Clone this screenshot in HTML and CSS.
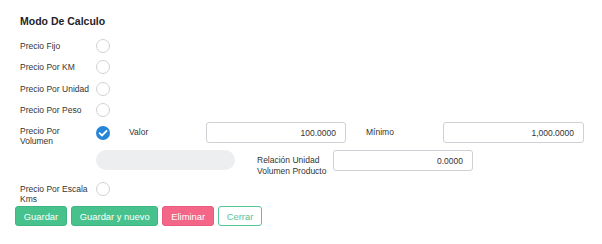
FILE: index.html
```html
<!DOCTYPE html>
<html>
    <head>
        <meta charset="utf-8" />
        <meta name="viewport" content="width=device-width, initial-scale=1" />
        <title>Modo De Calculo</title>
        <link rel="stylesheet" href="styles.css">
    </head>
    <body>
        <div class="pane">
            <div class="fields">
                <h1>Modo De Calculo</h1>

                <div class="row">
                    <span class="label">Precio Fijo</span>
                    <span class="radio"></span>
                </div>
                <div class="row">
                    <span class="label">Precio Por KM</span>
                    <span class="radio"></span>
                </div>
                <div class="row">
                    <span class="label">Precio Por Unidad</span>
                    <span class="radio"></span>
                </div>
                <div class="row before-group">
                    <span class="label">Precio Por Peso</span>
                    <span class="radio"></span>
                </div>

                <div class="row volumen">
                    <span class="label">Precio Por Volumen</span>
                    <div class="volumen-body">
                        <div class="sub">
                            <span class="radio checked">
                                <svg viewBox="0 0 14 14" width="14" height="14">
                                    <path d="M3.6 7.2 L6 9.5 L10.6 4.8" fill="none" stroke="#fff" stroke-width="1.8" stroke-linecap="round" stroke-linejoin="round" />
                                </svg>
                            </span>
                            <span class="field-label first">Valor</span>
                            <input class="num" type="text" value="100.0000" />
                            <span class="field-label gap">Mínimo</span>
                            <input class="num wide" type="text" value="1,000.0000" />
                        </div>
                        <div class="sub second">
                            <span class="pill"></span>
                            <span class="field-label two">Relación Unidad Volumen Producto</span>
                            <input class="num" type="text" value="0.0000" />
                        </div>
                    </div>
                </div>

                <div class="row escala">
                    <span class="label">Precio Por Escala Kms</span>
                    <span class="radio"></span>
                </div>
            </div>

            <div class="actions">
                <button class="btn green">Guardar</button>
                <button class="btn green">Guardar y nuevo</button>
                <button class="btn pink">Eliminar</button>
                <button class="btn outline">Cerrar</button>
            </div>
        </div>
    </body>
</html>
```

FILE: styles.css
```css
body {
    font-family: "Liberation Sans", Arial, Helvetica, sans-serif;
    color: #333;
    margin: 0;
    padding: 0;
    background: #fff;
}

.pane {
    padding: 14px 15px 0;
}

.fields {
    padding-left: 5px;
    display: flex;
    flex-direction: column;
}

.pane h1 {
    font-size: 10.5px;
    font-weight: bold;
    color: #1f2229;
    margin: 0 0 10.5px;
    line-height: 14px;
}

.row {
    display: flex;
    align-items: center;
    height: 14px;
    margin-bottom: 7.5px;
    font-size: 8.5px;
}

.row.before-group {
    margin-bottom: 5px;
}

.label {
    width: 72px;
    margin-right: 4px;
    flex: none;
    line-height: 10px;
}

.radio {
    width: 14px;
    height: 14px;
    box-sizing: border-box;
    border: 1px solid #cfd2d6;
    border-radius: 50%;
    flex: none;
    background: #fff;
}

.radio.checked {
    border: none;
    background: #2384d8;
}

.radio svg {
    display: block;
}

/* volumen block */
.row.volumen {
    height: auto;
    align-items: flex-start;
    margin-bottom: 6px;
}

.row.volumen .label {
    padding-top: 4px;
}

.volumen-body {
    display: flex;
    flex-direction: column;
    gap: 6px;
}

.sub {
    display: flex;
    align-items: center;
    height: 21px;
}

.sub.second {
    height: auto;
    align-items: flex-start;
}

.field-label {
    flex: none;
    line-height: 10.5px;
}

.field-label.first {
    width: 77px;
    margin-left: 19px;
}

.field-label.gap {
    width: 77px;
    margin-left: 20px;
}

.field-label.two {
    width: 76px;
    margin-left: 22px;
    padding-top: 6px;
}

.num {
    width: 140px;
    height: 21px;
    box-sizing: border-box;
    border: 1px solid #cdd0d4;
    border-radius: 3px;
    padding: 0 9px 0 6px;
    text-align: right;
    font-family: inherit;
    font-size: 8.5px;
    color: #333;
    background: #fff;
}

.num.wide {
    width: 141px;
}

.sub.second .num {
    margin-top: 1px;
}

.pill {
    width: 139px;
    height: 20px;
    margin-top: 1px;
    border-radius: 10px;
    background: #eceeef;
    flex: none;
}

.row.escala {
    height: auto;
    margin-bottom: 0;
    align-items: flex-start;
}

.row.escala .label {
    padding-top: 2px;
}

.actions {
    display: flex;
    gap: 4px;
    margin-top: 2px;
}

.btn {
    height: 20px;
    box-sizing: border-box;
    padding: 0 7.8px;
    border-radius: 3px;
    font-family: inherit;
    font-size: 9.4px;
    border: 1px solid transparent;
    color: #fff;
}

.btn.green {
    background: #47c28d;
    border-color: #3fb583;
}

.btn.pink {
    background: #f36688;
    border-color: #ea5a7e;
}

.btn.outline {
    background: #fff;
    border-color: #56c597;
    color: #56c597;
}
```
